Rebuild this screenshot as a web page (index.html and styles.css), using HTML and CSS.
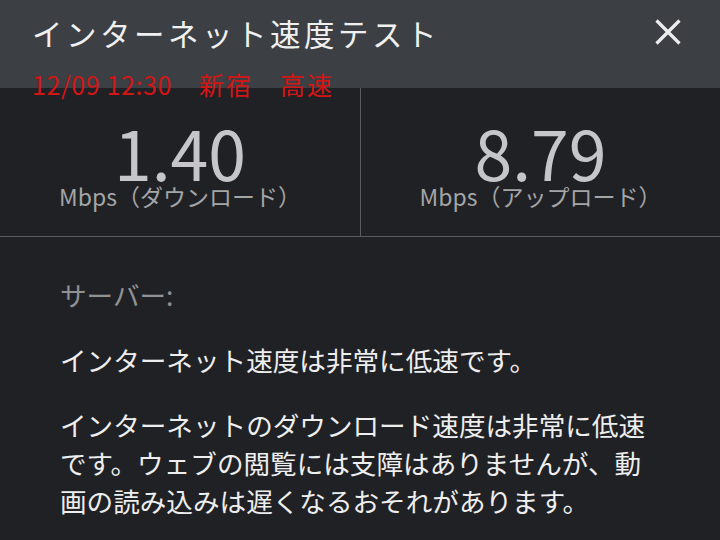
FILE: index.html
```html
<!DOCTYPE html>
<html lang="ja">
<head>
<meta charset="utf-8">
<title>インターネット速度テスト</title>
<link rel="stylesheet" href="styles.css">
</head>
<body>
<div class="screen">
  <header class="header">
    <h1 class="title">インターネット速度テスト</h1>
    <svg class="close" width="26" height="26" viewBox="0 0 26 26" aria-label="閉じる">
      <path d="M1.5 1.5 L24.5 24.5 M24.5 1.5 L1.5 24.5" stroke="#ededed" stroke-width="3.2" fill="none"/>
    </svg>
  </header>
  <div class="stamp">12/09 12:30<span class="stamp-place">　新宿　高速</span></div>
  <section class="stats">
    <div class="stat">
      <div class="value">1.40</div>
      <div class="unit">Mbps（ダウンロード）</div>
    </div>
    <div class="stat stat-right">
      <div class="value">8.79</div>
      <div class="unit">Mbps（アップロード）</div>
    </div>
  </section>
  <section class="details">
    <p class="server">サーバー:</p>
    <p class="text">インターネット速度は非常に低速です。</p>
    <p class="text">インターネットのダウンロード速度は非常に低速です。ウェブの閲覧には支障はありませんが、動画の読み込みは遅くなるおそれがあります。</p>
  </section>
</div>
</body>
</html>
```
FILE: styles.css
```css
html, body {
  margin: 0;
  padding: 0;
  background: #202125;
}
body {
  font-family: "Noto Sans CJK JP", "Noto Sans", sans-serif;
  width: 720px;
  height: 540px;
  overflow: hidden;
}
.screen {
  position: relative;
  width: 720px;
  height: 540px;
  background: #202125;
}
.header {
  height: 88px;
  box-sizing: border-box;
  background: #3c3f43;
  display: flex;
  justify-content: space-between;
  align-items: flex-start;
  padding: 13px 39px 0 32px;
}
.title {
  margin: 0;
  font-size: 30.5px;
  line-height: 40px;
  font-weight: 400;
  letter-spacing: 3.5px;
  color: #f0f0f0;
}
.close {
  margin-top: 5.5px;
  display: block;
}
.stamp {
  position: absolute;
  left: 32px;
  top: 69px;
  font-size: 25px;
  line-height: 30px;
  letter-spacing: 0.6px;
  color: #d41515;
  white-space: pre;
}
.stamp-place {
  letter-spacing: 2px;
}
.stats {
  display: grid;
  grid-template-columns: 360px 1fr;
  border-bottom: 1px solid #5b5c60;
}
.stat {
  display: flex;
  flex-direction: column;
  align-items: center;
  padding: 33px 0 27px;
}
.stat-right {
  border-left: 1px solid #5b5c60;
}
.value {
  font-size: 68px;
  line-height: 62px;
  color: #c6c6c8;
}
.unit {
  font-size: 23px;
  line-height: 26px;
  color: #a4a5a7;
}
.details {
  padding: 39px 60px 0 60px;
}
.details p {
  margin: 0 0 27px;
  font-size: 26.6px;
  line-height: 38px;
}
.server {
  color: #909193;
}
.text {
  color: #eeeeee;
}
```
